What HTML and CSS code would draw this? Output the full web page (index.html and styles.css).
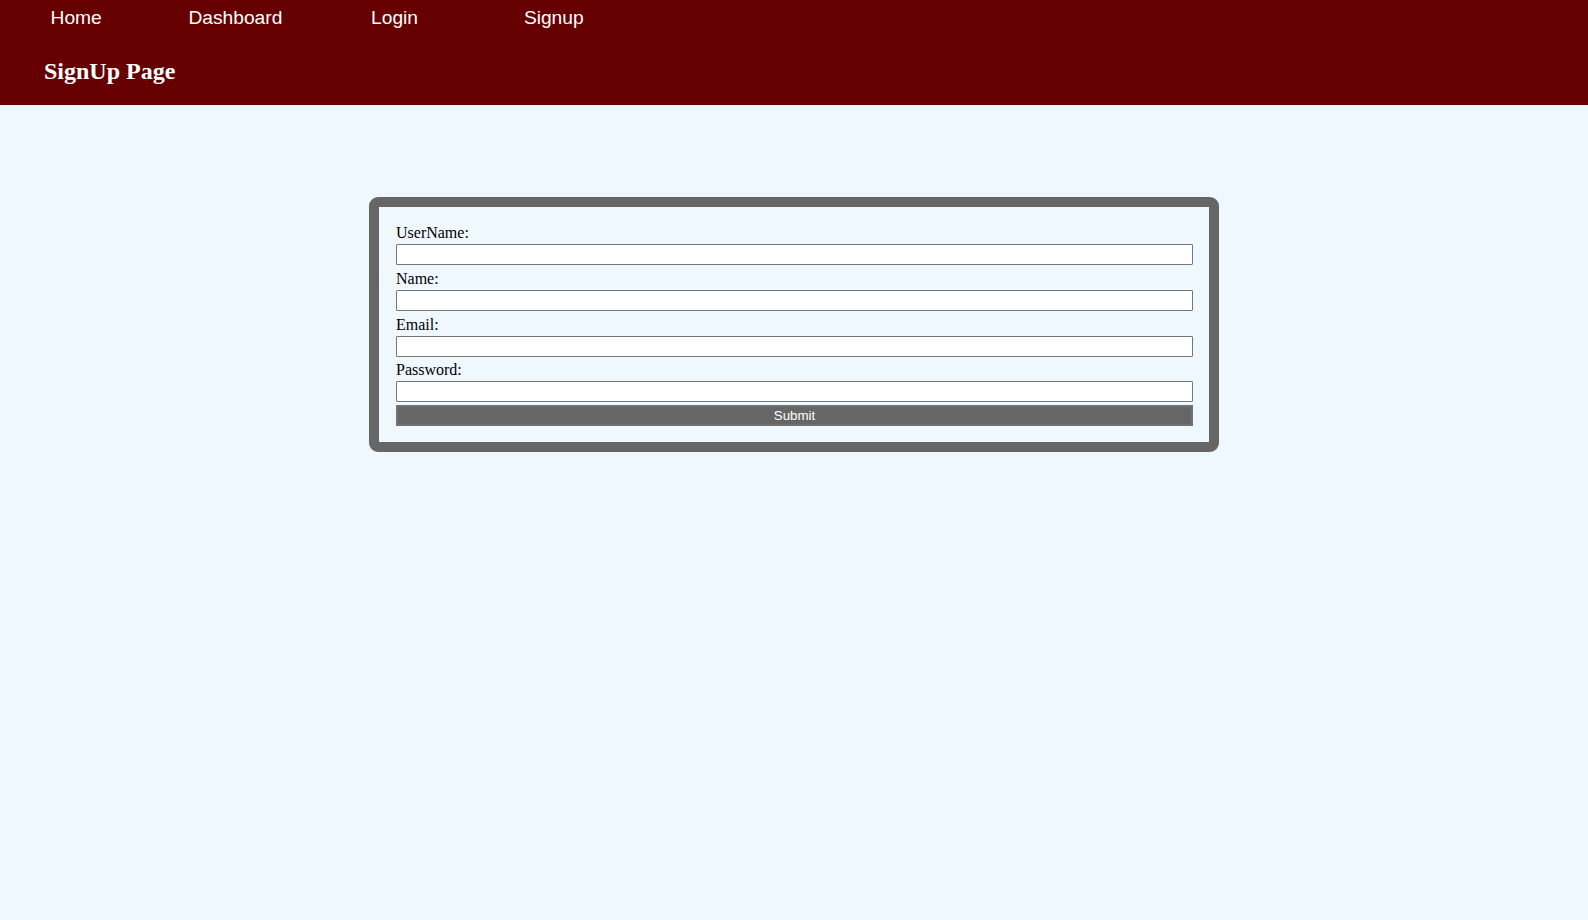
FILE: index.html
```html
<!DOCTYPE html>
<html lang="en">
<head>
<meta charset="utf-8">
<title>SignUp Page</title>
<link rel="stylesheet" href="styles.css">
</head>
<body>
<header class="site-header">
  <nav class="nav">
    <a class="nav-link" href="#">Home</a>
    <a class="nav-link" href="#">Dashboard</a>
    <a class="nav-link" href="#">Login</a>
    <a class="nav-link" href="#">Signup</a>
  </nav>
  <h2 class="page-title">SignUp Page</h2>
</header>
<main class="main">
  <form class="signup-box">
    <label class="field-label" for="username">UserName:</label>
    <input class="field-input" id="username" type="text">
    <label class="field-label" for="name">Name:</label>
    <input class="field-input" id="name" type="text">
    <label class="field-label" for="email">Email:</label>
    <input class="field-input" id="email" type="text">
    <label class="field-label" for="password">Password:</label>
    <input class="field-input field-input-last" id="password" type="password">
    <button class="submit-btn" type="button">Submit</button>
  </form>
</main>
</body>
</html>
```

FILE: styles.css
```css
html, body {
  margin: 0;
  padding: 0;
  background: #f0f8ff;
  min-height: 100%;
}

body {
  font-family: "Liberation Serif", "Times New Roman", serif;
  font-size: 16px;
  color: #000;
}

.site-header {
  background: #660000;
  padding: 7px 0 20px 0;
  box-sizing: border-box;
  height: 105px;
}

.nav {
  display: flex;
  gap: 6.8px;
  height: 22px;
}

.nav-link {
  width: 152.4px;
  text-align: center;
  font-family: "Liberation Sans", Arial, sans-serif;
  font-size: 19.2px;
  line-height: 22px;
  color: #ffffff;
  text-decoration: none;
}

.page-title {
  margin: 28px 0 0 44px;
  font-family: "Liberation Serif", "Times New Roman", serif;
  font-size: 24px;
  font-weight: bold;
  line-height: 28px;
  color: #ffffff;
}

.main {
  padding-top: 92px;
}

.signup-box {
  box-sizing: border-box;
  width: 850px;
  margin: 0 auto;
  border: 10px solid #666666;
  border-radius: 9px;
  padding: 16px 16px 16px 17px;
  display: flex;
  flex-direction: column;
}

.field-label {
  display: block;
  line-height: 20px;
  height: 20px;
}

.field-input {
  display: block;
  box-sizing: border-box;
  width: 100%;
  height: 21px;
  margin: 1px 0 3.8px 0;
  padding: 1px 2px;
  border: 1px solid #767676;
  border-radius: 1px;
  background: #ffffff;
  font-family: "Liberation Sans", Arial, sans-serif;
  font-size: 13.33px;
}

.field-input-last {
  margin-bottom: 3px;
}

.submit-btn {
  display: block;
  box-sizing: border-box;
  width: 100%;
  height: 21px;
  margin: 0;
  padding: 0;
  border: 2px solid #727272;
  background: #666666;
  color: #ffffff;
  font-family: "Liberation Sans", Arial, sans-serif;
  font-size: 13.33px;
  line-height: 17px;
  text-align: center;
}
```
